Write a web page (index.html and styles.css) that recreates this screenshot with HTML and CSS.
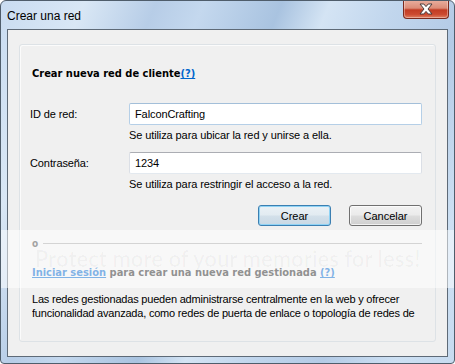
FILE: index.html
```html
<!DOCTYPE html>
<html lang="es">
<head>
  <meta charset="UTF-8">
  <title>Crear una red</title>
  <link rel="stylesheet" href="styles.css">
</head>
<body>
  <div class="window">
    <div class="titlebar">
      <span class="title">Crear una red</span>
      <button class="close-button" aria-label="Cerrar">
        <svg width="16" height="12" viewBox="0 0 16 12">
          <path d="M2 1 H5.8 L8 3.6 L10.2 1 H14 L10 6 L14 11 H10.2 L8 8.4 L5.8 11 H2 L6 6 Z" fill="#fff" stroke="#4a3a3a" stroke-width="1" stroke-linejoin="round"/>
        </svg>
      </button>
    </div>

    <div class="client">
      <div class="group">
        <h1 class="heading">Crear nueva red de cliente<a href="#" class="help">(?)</a></h1>

        <div class="form">
          <label for="network-id">ID de red:</label>
          <input type="text" id="network-id" class="field focused" value="FalconCrafting">
          <div class="hint">Se utiliza para ubicar la red y unirse a ella.</div>

          <label for="password">Contraseña:</label>
          <input type="text" id="password" class="field" value="1234">
          <div class="hint">Se utiliza para restringir el acceso a la red.</div>
        </div>

        <div class="buttons">
          <button class="win-button default-button">Crear</button>
          <button class="win-button">Cancelar</button>
        </div>

        <div class="separator">
          <span>o</span>
          <div class="line"></div>
        </div>

        <div class="managed">
          <a href="#" class="link">Iniciar sesión</a> para crear una nueva red gestionada <a href="#" class="help">(?)</a>
        </div>

        <p class="description">Las redes gestionadas pueden administrarse centralmente en la web y ofrecer funcionalidad avanzada, como redes de puerta de enlace o topología de redes de</p>
      </div>
    </div>

    <div class="watermark">Protect more of your memories for less!</div>
  </div>
</body>
</html>
```

FILE: styles.css
```css
:root {
  --client-bg: #f0f0f0;
  --text-color: #000;
  --link-color: #0066cc;
  --ui-font: 'Liberation Sans', Arial, sans-serif;
  --bold-font: 'DejaVu Sans Condensed', 'DejaVu Sans', sans-serif;
}

* {
  margin: 0;
  padding: 0;
  box-sizing: border-box;
}

body {
  font-family: var(--ui-font);
  font-size: 11px;
  letter-spacing: -0.1px;
  color: var(--text-color);
  background: #fff;
  width: 455px;
  height: 364px;
  overflow: hidden;
}

.window {
  position: relative;
  width: 455px;
  height: 364px;
  border: 1px solid #4f5d6b;
  border-radius: 6px 6px 4px 4px;
  background:
    linear-gradient(112deg,
      #c9dcf1 0%, #d9e7f5 14%, #b7cde7 26%, #c4d8ee 34%,
      #a9c3e0 47%, #d4e4f4 55%, #c1d6ed 66%, #b4cbe6 78%, #cde0f3 90%, #c7dbf0 100%);
  display: flex;
  flex-direction: column;
  overflow: hidden;
}

/* Title bar */
.titlebar {
  height: 28px;
  display: flex;
  align-items: flex-start;
  justify-content: space-between;
  padding-left: 6px;
  padding-right: 5px;
}

.title {
  font-size: 12px;
  letter-spacing: 0;
  line-height: 14px;
  margin-top: 8px;
}

.close-button {
  width: 46px;
  height: 19px;
  margin-top: -1px;
  border: 1px solid #7a2a1e;
  border-top: none;
  border-radius: 0 0 4px 4px;
  background: linear-gradient(#eab0a0 0%, #dc8c78 45%, #c23c24 55%, #cc4a30 80%, #e08062 100%);
  box-shadow: inset 0 0 0 1px rgba(255, 255, 255, 0.35);
  display: flex;
  align-items: center;
  justify-content: center;
  padding-bottom: 1px;
}

/* Client area */
.client {
  flex: 1;
  margin: 0 6px 6px 6px;
  border: 1px solid #5e6a77;
  background-color: var(--client-bg);
  padding: 14px 11px 14px 11px;
  display: flex;
}

.group {
  flex: 1;
  border: 1px solid #dde2e6;
  border-radius: 3px;
  box-shadow: inset 1px 1px 0 #fbfbfb;
  padding: 0 13px 0 10px;
  display: flex;
  flex-direction: column;
}

.heading {
  margin-top: 22px;
  margin-left: 2px;
  font-family: var(--bold-font);
  font-size: 11px;
  font-weight: 700;
  letter-spacing: 0;
  line-height: 14px;
}

.help {
  color: var(--link-color);
  text-decoration: underline;
}

/* Form */
.form {
  margin-top: 22px;
  display: grid;
  grid-template-columns: 99px 1fr;
  align-items: center;
}

.form label {
  grid-column: 1;
  line-height: 14px;
}

.field {
  grid-column: 2;
  height: 22px;
  border: 1px solid #dbdfe6;
  border-top-color: #abadb3;
  border-bottom-color: #e3e9ef;
  border-radius: 2px;
  background: #fff;
  padding: 0 5px;
  font-family: var(--ui-font);
  font-size: 11px;
  letter-spacing: -0.1px;
  color: #000;
}

.field.focused {
  border-color: #b5cfe7;
  border-top-color: #a3bfd9;
}

.hint {
  grid-column: 2;
  line-height: 14px;
  margin: 3px 0 10px;
}

.hint:last-child {
  margin-bottom: 0;
}

/* Buttons */
.buttons {
  margin-top: 14px;
  display: flex;
  justify-content: flex-end;
  gap: 18px;
}

.win-button {
  width: 73px;
  height: 21px;
  border: 1px solid #707070;
  border-radius: 3px;
  background: linear-gradient(#f2f2f2 0%, #ebebeb 48%, #dddddd 52%, #cfcfcf 100%);
  box-shadow: inset 0 0 0 1px rgba(255, 255, 255, 0.7);
  font-family: var(--ui-font);
  font-size: 11px;
  color: #000;
}

.default-button {
  border-color: #3c7fb1;
  background: linear-gradient(#eaf1f6 0%, #e2ebf1 48%, #d3e0ea 52%, #c8d8e4 100%);
  box-shadow: inset 0 0 0 1px #8fd3f5;
}

/* Managed network section */
.separator {
  margin-top: 10px;
  margin-left: 2px;
  display: flex;
  align-items: center;
  gap: 5px;
  height: 14px;
  font-family: var(--bold-font);
  font-weight: 700;
  font-size: 10px;
  color: #444;
}

.line {
  flex: 1;
  height: 1px;
  background-color: #a8a8a8;
}

.managed {
  margin-top: 16px;
  margin-left: 2px;
  line-height: 14px;
  font-family: var(--bold-font);
  font-weight: 700;
  font-size: 11px;
  letter-spacing: 0;
  color: #222;
}

.link {
  color: var(--link-color);
  text-decoration: underline;
}

.description {
  margin-top: 12px;
  margin-left: 2px;
  margin-right: -4px;
  line-height: 14px;
  letter-spacing: -0.2px;
  height: 28px;
  overflow: hidden;
}

/* Photo host overlay band */
.watermark {
  position: absolute;
  left: -1px;
  top: 229px;
  width: 455px;
  height: 58px;
  background-color: rgba(255, 255, 255, 0.5);
  padding-top: 18px;
  text-align: center;
  font-family: 'Lato', sans-serif;
  font-weight: 700;
  font-size: 22px;
  letter-spacing: 0;
  line-height: 22px;
  color: rgba(0, 0, 0, 0.03);
  pointer-events: none;
}
```
